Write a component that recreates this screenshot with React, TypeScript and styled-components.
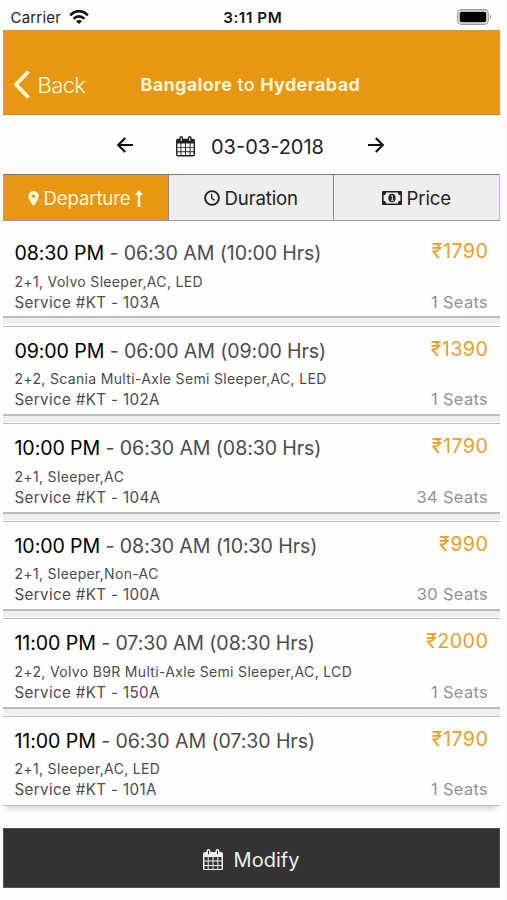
import React from 'react';
import styled, { createGlobalStyle, css } from 'styled-components';

const ORANGE = '#e89713';

const GlobalStyle = createGlobalStyle`
  * { box-sizing: border-box; }
  body { margin: 0; background: #fefefe; font-family: Inter, "Liberation Sans", sans-serif; color: #222; }
  svg { display: block; flex: none; }
`;

const Screen = styled.main`
  width: 507px;
  height: 900px;
  padding: 0 6px 0 3px;
  background: #fefefe;
  border-right: 1px solid #f7f7f7;
  display: flex;
  flex-direction: column;
  overflow: hidden;
  white-space: nowrap;
`;

const StatusBar = styled.div`
  height: 30px;
  padding: 4px 8px 0 7.5px;
  display: grid;
  grid-template-columns: 1fr auto 1fr;
  align-items: center;
  font-size: 15px;
`;
const Carrier = styled.span`
  display: flex;
  align-items: center;
  gap: 8px;
  letter-spacing: 0.2px;
`;
const Clock = styled.strong`
  font-weight: 600;
  color: #151515;
  font-size: 15.2px;
  letter-spacing: 0.6px;
  padding-left: 3px;
`;
const BatterySlot = styled.span`
  justify-self: end;
`;

const NavBar = styled.header`
  height: 85px;
  padding: 24px 0 0 9.5px;
  background: ${ORANGE};
  border-top: 1px solid #c39a50;
  border-bottom: 1px solid #c8871e;
  color: #fff6d8;
  display: grid;
  grid-template-columns: 128px auto;
  justify-content: start;
  align-items: center;
`;
const BackButton = styled.a`
  display: flex;
  align-items: center;
  gap: 7px;
  font-size: 22px;
  font-weight: 300;
  letter-spacing: -0.6px;
`;
const Title = styled.h1`
  margin: 0;
  font-size: 18px;
  font-weight: 500;
  letter-spacing: 0.33px;
  b { font-weight: 700; }
`;

const DateRow = styled.div`
  height: 59px;
  padding: 1px 0 0 113px;
  display: flex;
  align-items: center;
`;
const DateLabel = styled.span`
  display: flex;
  align-items: center;
  gap: 16px;
  margin: 3px 43px 0 42px;
  font-size: 20px;
`;

const Tabs = styled.nav`
  height: 47px;
  display: grid;
  grid-template-columns: 165px 165px 1fr;
  border-top: 1px solid #777;
  border-bottom: 1px solid #999;
  border-right: 1px solid #e6bd7b;
`;
const Tab = styled.button<{ $active?: boolean }>`
  border: 0;
  padding: 1px 0 0;
  background: #eee;
  color: #222;
  font: 400 18.6px Inter, sans-serif;
  letter-spacing: -0.15px;
  display: flex;
  align-items: center;
  justify-content: center;
  gap: 4.5px;
  & + & { border-left: 1px solid #888; }
  ${(p) => p.$active && css`
    background: ${ORANGE};
    color: #fff6d8;
  `}
`;

const List = styled.section`
  height: 607px;
  padding-top: 7px;
`;
const Card = styled.article`
  height: 90.4px;
  margin-bottom: 7.2px;
  padding: 11px 12px 0 11.5px;
  background: #fefefe;
  border-top: 1px solid #bdbdbd;
  border-bottom: 2px solid #bbb;
  box-shadow: 0 6px 0 #eee;
  display: flex;
  justify-content: space-between;
  &:first-child { border-top-color: transparent; }
  &:last-child {
    border-bottom-width: 1px;
    box-shadow: 0 7px 5px -4px #d5d5d5;
  }
`;
const Info = styled.div`
  display: flex;
  flex-direction: column;
  color: #4c4c4c;
`;
const Times = styled.div`
  line-height: 27px;
  font-size: 19.6px;
  letter-spacing: -0.1px;
  b { font-weight: 400; color: #000; }
`;
const Detail = styled.div<{ $size: number; $spacing: number }>`
  font-size: ${(p) => p.$size}px;
  letter-spacing: ${(p) => p.$spacing}px;
  line-height: 21px;
  &:nth-child(2) { margin-top: 3.5px; }
`;
const Side = styled.div`
  display: flex;
  flex-direction: column;
  align-items: flex-end;
`;
const Fare = styled.div`
  color: #e6a02c;
  font-size: 19.8px;
  letter-spacing: 0.4px;
  margin-right: -0.4px;
  line-height: 22px;
`;
const Seats = styled.div`
  margin-top: 29.5px;
  color: #929292;
  font-size: 16.4px;
  letter-spacing: 0.35px;
  line-height: 21px;
`;

const ModifyButton = styled.button`
  height: 60px;
  border: 1px solid #555;
  background: #333;
  color: #eee;
  font: 400 20px Inter, sans-serif;
  display: flex;
  align-items: center;
  justify-content: center;
  gap: 11px;
  padding: 3px 1px 0 0;
`;

const WifiIcon = () => (
  <svg width="20" height="14" viewBox="0 0 20 14" fill="none" stroke="#111" strokeWidth="2.7">
    <path d="M1.2 5.4C6-.3 14-.3 18.800 5.400" />
    <path d="M4.600 8.900c3-3.400 7.800-3.400 10.800 0" />
    <path d="M10 14 7 11.200c1.800-1.700 4.200-1.700 6 0Z" fill="#111" stroke="none" />
  </svg>
);

const BatteryIcon = () => (
  <svg width="35" height="16" viewBox="0 0 35 16">
    <rect x=".75" y=".75" width="30.500" height="14.500" rx="4" fill="#fff" stroke="#999" strokeWidth="1.300" />
    <rect x="2.700" y="2.700" width="26.600" height="10.600" rx="1.800" />
    <path d="M33 5.500q2 2.500 0 5Z" fill="#777" />
  </svg>
);

const BackIcon = () => (
  <svg width="18" height="29" viewBox="0 0 18 29" fill="none" stroke="currentColor" strokeWidth="3.900">
    <path d="M15.500 1.500 3 14.500l12.500 13" />
  </svg>
);

const ArrowIcon = ({ right }: { right?: boolean }) => (
  <svg width="18" height="18" viewBox="0 0 18 18" fill="none" stroke="#111" strokeWidth="2.200">
    {right ? <path d="M1 9h14.500M8.800 2l7 7-7 7" /> : <path d="M17 9H2.500M9.200 2l-7 7 7 7" />}
  </svg>
);

const CalendarIcon = ({ size = 20 }: { size?: number }) => (
  <svg width={size} height={size * 1.08} viewBox="0 0 20 21.6">
    <path
      fill="currentColor"
      fillRule="evenodd"
      d="M2 3h1.500V2a2 2 0 0 1 4 0v1h5V2a2 2 0 0 1 4 0v1H18a2 2 0 0 1 2 2v14.500a2 2 0 0 1-2 2H2a2 2 0 0 1-2-2V5a2 2 0 0 1 2-2ZM5 1.500V5.300h1V1.500ZM14 1.500V5.300h1V1.500ZM1.500 8v3.500h3.200V8ZM5.700 8v3.500h3.800V8ZM10.500 8v3.500h3.800V8ZM15.300 8v3.500h3.200V8ZM1.500 12.500V16h3.200v-3.500ZM5.700 12.500V16h3.800v-3.500ZM10.500 12.500V16h3.800v-3.500ZM15.300 12.500V16h3.200v-3.500ZM1.500 17v3.100h3.200V17ZM5.700 17v3.100h3.800V17ZM10.500 17v3.100h3.800V17ZM15.300 17v3.100h3.200V17Z"
    />
  </svg>
);

const PinIcon = () => (
  <svg width="11" height="15" viewBox="0 0 11 16">
    <path fill="currentColor" fillRule="evenodd" d="M5.500 0A5.500 5.500 0 0 0 0 5.500C0 9.500 5.500 16 5.500 16S11 9.500 11 5.500A5.500 5.500 0 0 0 5.500 0Zm0 3.700a1.800 1.800 0 1 1 0 3.600 1.800 1.800 0 0 1 0-3.600Z" />
  </svg>
);

const UpIcon = () => (
  <svg width="8" height="17" viewBox="0 0 8 17" fill="currentColor">
    <path d="M4 0 8 5H5.300v12H2.700V5H0Z" />
  </svg>
);

const DurationIcon = () => (
  <svg width="16" height="16" viewBox="0 0 16 16" fill="none" stroke="currentColor">
    <circle cx="8" cy="8" r="6.900" strokeWidth="1.900" />
    <path d="M7.700 3.800v4.500l3 2" strokeWidth="1.300" />
  </svg>
);

const MoneyIcon = () => (
  <svg width="20" height="14" viewBox="0 0 20 14" fill="currentColor">
    <path fillRule="evenodd" d="M1 0h18a1 1 0 0 1 1 1v12a1 1 0 0 1-1 1H1a1 1 0 0 1-1-1V1a1 1 0 0 1 1-1Zm3 1.600a2.500 2.500 0 0 1-2.400 2.600v5.600A2.500 2.500 0 0 1 4 12.400h12a2.500 2.500 0 0 1 2.400-2.600V4.200A2.500 2.500 0 0 1 16 1.600Z" />
    <ellipse cx="10" cy="7" rx="3.600" ry="4.300" />
    <path d="m8.900 5.200 1.400-.8v4.800M8.800 9.300h3" fill="none" stroke="#eee" />
  </svg>
);

type Trip = { from: string; to: string; coach: string; service: string; fare: number; seats: number };

const trips: Trip[] = [
  { from: '08:30 PM', to: '06:30 AM (10:00 Hrs)', coach: '2+1, Volvo Sleeper,AC, LED', service: '103A', fare: 1790, seats: 1 },
  { from: '09:00 PM', to: '06:00 AM (09:00 Hrs)', coach: '2+2, Scania Multi-Axle Semi Sleeper,AC, LED', service: '102A', fare: 1390, seats: 1 },
  { from: '10:00 PM', to: '06:30 AM (08:30 Hrs)', coach: '2+1, Sleeper,AC', service: '104A', fare: 1790, seats: 34 },
  { from: '10:00 PM', to: '08:30 AM (10:30 Hrs)', coach: '2+1, Sleeper,Non-AC', service: '100A', fare: 990, seats: 30 },
  { from: '11:00 PM', to: '07:30 AM (08:30 Hrs)', coach: '2+2, Volvo B9R Multi-Axle Semi Sleeper,AC, LCD', service: '150A', fare: 2000, seats: 1 },
  { from: '11:00 PM', to: '06:30 AM (07:30 Hrs)', coach: '2+1, Sleeper,AC, LED', service: '101A', fare: 1790, seats: 1 },
];

export default function App() {
  return (
    <>
      <GlobalStyle />
      <Screen>
        <StatusBar>
          <Carrier>Carrier <WifiIcon /></Carrier>
          <Clock>3:11 PM</Clock>
          <BatterySlot><BatteryIcon /></BatterySlot>
        </StatusBar>
        <NavBar>
          <BackButton><BackIcon />Back</BackButton>
          <Title><b>Bangalore</b> to <b>Hyderabad</b></Title>
        </NavBar>
        <DateRow>
          <ArrowIcon />
          <DateLabel><CalendarIcon size={19} />03-03-2018</DateLabel>
          <ArrowIcon right />
        </DateRow>
        <Tabs>
          <Tab $active><PinIcon />Departure<UpIcon /></Tab>
          <Tab><DurationIcon />Duration</Tab>
          <Tab><MoneyIcon />Price</Tab>
        </Tabs>
        <List>
          {trips.map((t) => (
            <Card key={t.service}>
              <Info>
                <Times><b>{t.from}</b> - {t.to}</Times>
                <Detail $size={14} $spacing={0.33}>{t.coach}</Detail>
                <Detail $size={15.2} $spacing={0.34}>Service #KT - {t.service}</Detail>
              </Info>
              <Side>
                <Fare>₹{t.fare}</Fare>
                <Seats>{t.seats} Seats</Seats>
              </Side>
            </Card>
          ))}
        </List>
        <ModifyButton><CalendarIcon />Modify</ModifyButton>
      </Screen>
    </>
  );
}
